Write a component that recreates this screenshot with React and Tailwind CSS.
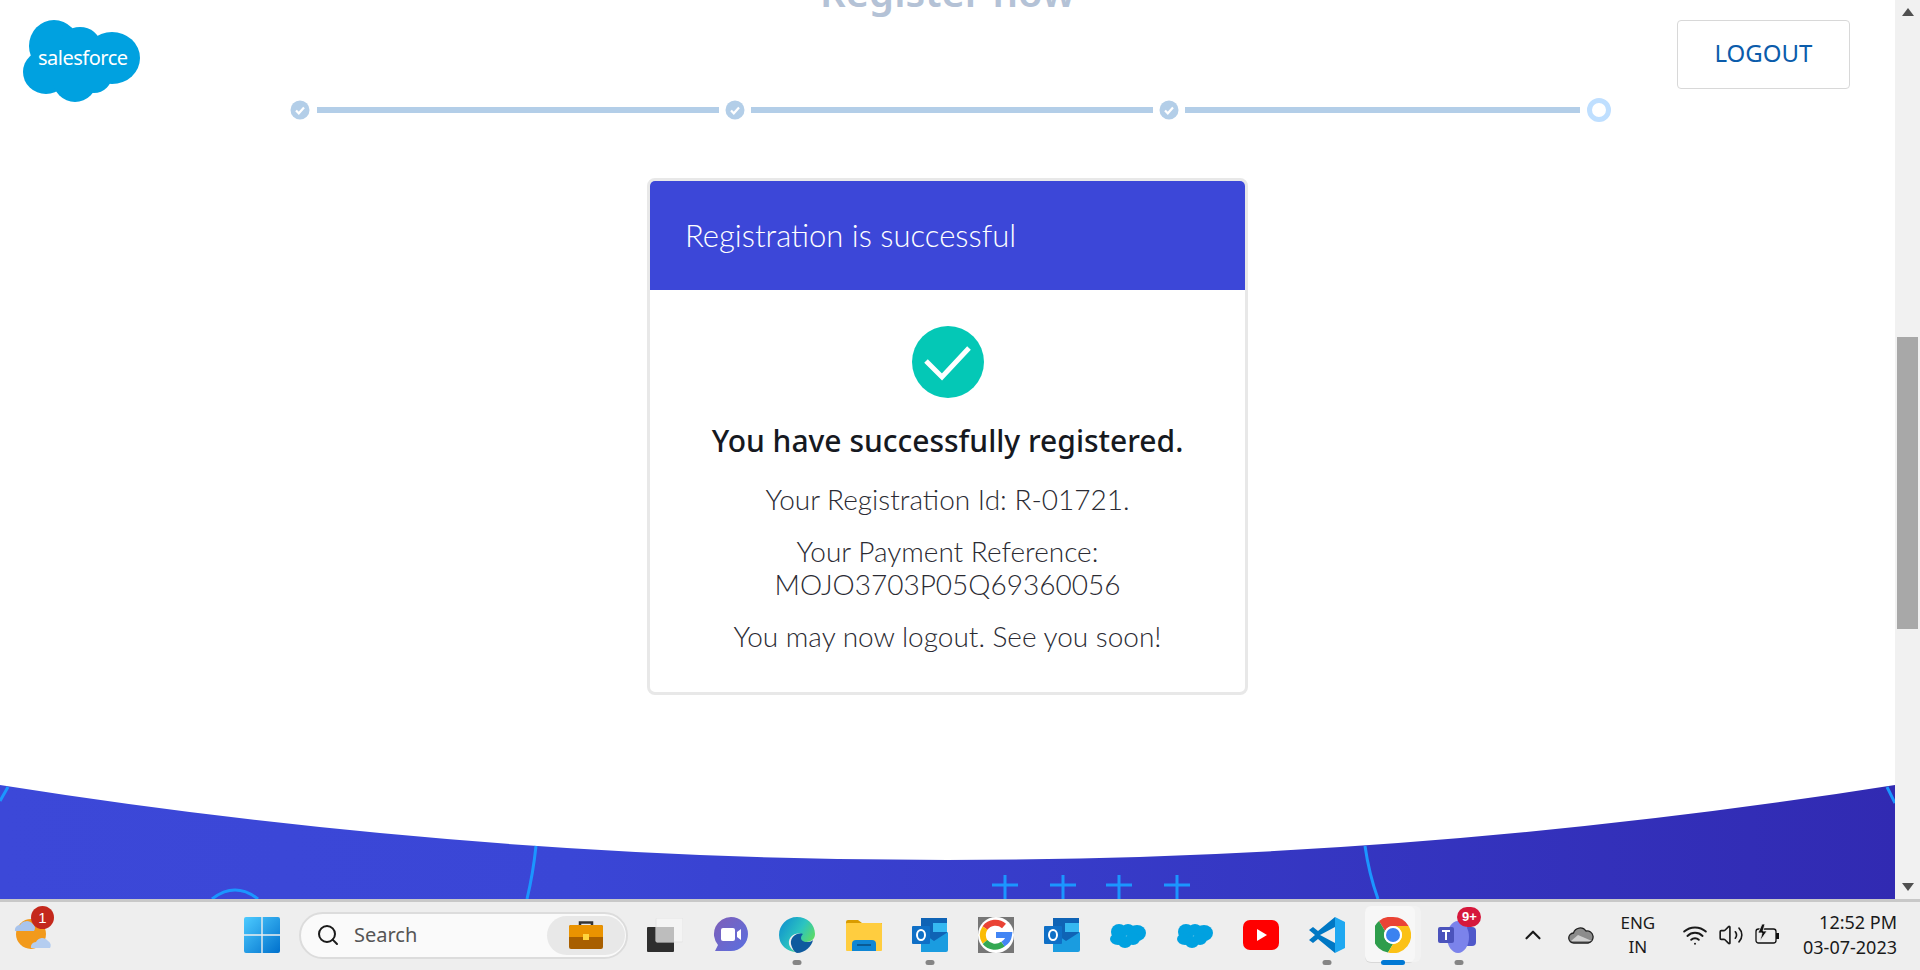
import { ChevronUp, Search, Volume2, Wifi } from 'lucide-react';

const sans = "font-['Noto_Sans','Open_Sans',sans-serif]";
const thin = "font-['Lato','Noto_Sans',sans-serif]";

function StepDone() {
  return (
    <svg width="20" height="20" viewBox="0 0 20 20" className="shrink-0">
      <circle cx="10" cy="10" r="9.5" fill="#b3cee8" />
      <path d="M6 10.5l2.8 2.8L14 7.5" fill="none" stroke="#fff" strokeWidth="2.2" />
    </svg>
  );
}

function Stepper() {
  return (
    <div className="flex items-center w-[1324px] ml-[290px] h-[26px] shrink-0">
      <StepDone />
      <div className="h-[6px] bg-[#b3cee8] w-[402px] ml-[7px]" />
      <div className="ml-[6px]"><StepDone /></div>
      <div className="h-[6px] bg-[#b3cee8] w-[402px] ml-[6px]" />
      <div className="ml-[6px]"><StepDone /></div>
      <div className="h-[6px] bg-[#b3cee8] w-[395px] ml-[6px]" />
      <div className="ml-[7px] w-[24px] h-[24px] rounded-full border-[5px] border-[#bfdfff] bg-white" />
    </div>
  );
}

function SalesforceLogo() {
  return (
    <div className="relative w-[118px] h-[82px] shrink-0">
      <svg width="118" height="82" viewBox="0 0 118 82" className="block">
        <g fill="#00a1e0">
          <ellipse cx="32" cy="26" rx="25" ry="26" />
          <ellipse cx="58" cy="24" rx="20" ry="17" />
          <ellipse cx="90" cy="38" rx="28" ry="26" />
          <ellipse cx="24" cy="52" rx="23" ry="22" />
          <ellipse cx="53" cy="60" rx="22" ry="22" />
          <ellipse cx="72" cy="55" rx="18" ry="18" />
          <rect x="25" y="24" width="70" height="36" />
        </g>
      </svg>
      <span className="absolute left-[16px] top-[26px] text-[20px] leading-[24px] text-white font-['Noto_Sans',sans-serif] tracking-[-0.5px]">salesforce</span>
    </div>
  );
}

function PageFooter() {
  return (
    <svg width="1895" height="130" viewBox="0 0 1895 130" className="block mt-auto shrink-0">
      <defs>
        <linearGradient id="band" x1="0" x2="1" y1="0" y2="0">
          <stop offset="0" stopColor="#3c48d8" />
          <stop offset="0.3" stopColor="#3a46d6" />
          <stop offset="1" stopColor="#312ab2" />
        </linearGradient>
      </defs>
      <path d="M0 16 Q947 166 1895 16 V130 H0Z" fill="url(#band)" />
      <g fill="none" stroke="#1b96ff" strokeWidth="3">
        <path d="M8 18 L0 32" />
        <path d="M1887 18 L1895 34" />
        <path d="M536 77 Q533 105 527 130" />
        <path d="M1365 77 Q1369 105 1378 130" />
        <path d="M212 130 Q235 112 258 130" />
        <path d="M992 116H1018M1005 106V130M1050 116H1076M1063 106V130M1106 116H1132M1119 106V130M1164 116H1190M1177 106V130" />
      </g>
    </svg>
  );
}

function Card() {
  return (
    <div className="w-[601px] h-[517px] mx-auto mt-[55px] border-[3px] border-[#e8e8e8] rounded-[8px] overflow-hidden bg-white shrink-0">
      <div className={`h-[109px] bg-[#3c47d8] flex items-center pl-[35px] text-white text-[31px] font-light ${thin}`}>
        Registration is successful
      </div>
      <div className="flex flex-col items-center text-center">
        <svg width="72" height="72" viewBox="0 0 72 72" className="mt-[36px]">
          <circle cx="36" cy="36" r="36" fill="#04c8b6" />
          <path d="M14 35l16 16 27-29" fill="none" stroke="#fff" strokeWidth="5" />
        </svg>
        <p className={`mt-[23px] text-[30px] leading-[40px] font-medium text-[#16191f] ${sans}`}>You have successfully registered.</p>
        <div className={`mt-[22px] text-[28px] leading-[33px] font-light text-[#2b2b33] ${thin}`}>
          <p>Your Registration Id: R-01721.</p>
          <p className="mt-[19px]">Your Payment Reference:<br />MOJO3703P05Q69360056</p>
          <p className="mt-[19px]">You may now logout. See you soon!</p>
        </div>
      </div>
    </div>
  );
}

function Dot({ blue }) {
  return blue
    ? <span className="absolute bottom-[3px] left-1/2 -translate-x-1/2 w-[24px] h-[5px] rounded-full bg-[#0078d4]" />
    : <span className="absolute bottom-[3px] left-1/2 -translate-x-1/2 w-[9px] h-[5px] rounded-full bg-[#858585]" />;
}

function TaskIcon({ children, dot, blue, active }) {
  return (
    <div className="relative w-[66.2px] h-[66px] flex items-center justify-center shrink-0">
      {active && <div className="absolute left-[5px] top-[4px] w-[50px] h-[56px] rounded-[6px] bg-[#f7f7f7] shadow-[6px_0_0_#f2f2f2,0_1px_0_#d8d8d8]" />}
      <div className="relative">{children}</div>
      {(dot || blue) && <Dot blue={blue} />}
    </div>
  );
}

const WinLogo = () => (
  <svg width="36" height="36" viewBox="0 0 36 36">
    <defs>
      <linearGradient id="win" x1="0" y1="0" x2="1" y2="1">
        <stop offset="0" stopColor="#4dcbff" />
        <stop offset="1" stopColor="#0070cc" />
      </linearGradient>
    </defs>
    <path d="M0 2a2 2 0 012-2h15.300v17.300H0zM18.700 0H34a2 2 0 012 2v15.300H18.700zM0 18.700h17.300V36H2a2 2 0 01-2-2zM18.700 18.700H36V34a2 2 0 01-2 2H18.700z" fill="url(#win)" />
  </svg>
);

const Briefcase = () => (
  <svg width="36" height="30" viewBox="0 0 36 30">
    <path d="M12 6V2.500h12V6" fill="none" stroke="#333" strokeWidth="2.500" />
    <rect x="1" y="5" width="34" height="24" rx="2" fill="#a85f00" />
    <path d="M1 7a2 2 0 012-2h30a2 2 0 012 2v10H1z" fill="#ea9300" />
    <rect x="15" y="14" width="6" height="6" fill="#ffd43d" />
  </svg>
);

const TaskView = () => (
  <svg width="36" height="34" viewBox="0 0 36 34">
    <rect x="0" y="9" width="27" height="25" rx="1" fill="#2e2e2e" />
    <rect x="9" y="0" width="27" height="24" rx="1" fill="#f4f4f4" stroke="#e4e4e4" />
    <rect x="9" y="9" width="18" height="15" fill="#bdbdbd" />
  </svg>
);

const MeetChat = () => (
  <svg width="36" height="36" viewBox="0 0 36 36">
    <defs>
      <linearGradient id="meet" x1="0" y1="0" x2="1" y2="1">
        <stop offset="0" stopColor="#7f5fb8" />
        <stop offset="1" stopColor="#5a6fe0" />
      </linearGradient>
    </defs>
    <path d="M18 0a17 17 0 110 34H2l3-6A17 17 0 0118 0z" fill="url(#meet)" />
    <rect x="8" y="11" width="14" height="13" rx="2" fill="#fff" />
    <path d="M24 15l4-3v11l-4-3z" fill="#fff" />
  </svg>
);

const Edge = () => (
  <svg width="36" height="36" viewBox="0 0 36 36">
    <defs>
      <linearGradient id="edge" x1="0" y1="0" x2="1" y2="0.600">
        <stop offset="0" stopColor="#0c8ad0" />
        <stop offset="0.600" stopColor="#2cc4c0" />
        <stop offset="1" stopColor="#60dc60" />
      </linearGradient>
    </defs>
    <path d="M18 0c10 0 18 7 18 17 0 6-5 8-10 8-4 0-6-2-6-4 0-2 1-3 2-4-6-2-13 3-12 10 1 4 4 7 8 8C8 35 0 28 0 18 0 8 8 0 18 0z" fill="url(#edge)" />
    <path d="M12 27c-1-7 6-12 12-10-1 1-2 2-2 4 0 2 2 4 6 4 3 0 5-1 6-2-1 6-8 13-16 13-3-1-5-5-6-9z" fill="#0f5a9e" />
  </svg>
);

const Folder = () => (
  <svg width="36" height="32" viewBox="0 0 36 32">
    <path d="M0 3a2 2 0 012-2h10l4 3h20v4H0z" fill="#d99c00" />
    <rect x="0" y="4" width="36" height="28" rx="1" fill="#ffcd3f" />
    <path d="M6 32v-7a4 4 0 014-4h16a4 4 0 014 4v7z" fill="#0f86d4" />
    <rect x="11" y="25" width="14" height="2" fill="#0a5a94" />
  </svg>
);

const Outlook = () => (
  <svg width="36" height="34" viewBox="0 0 36 34">
    <rect x="9" y="0" width="26" height="24" fill="#0f63b5" />
    <rect x="21" y="5" width="14" height="9" fill="#35b8f1" />
    <path d="M9 14l13 9 14-9v18a2 2 0 01-2 2H9z" fill="#1a9ce0" />
    <rect x="0" y="8" width="18" height="18" rx="1" fill="#0f6fc6" />
    <ellipse cx="9" cy="17" rx="4" ry="5" fill="none" stroke="#fff" strokeWidth="2" />
  </svg>
);

const GoogleTile = () => (
  <svg width="36" height="36" viewBox="0 0 36 36">
    <rect width="36" height="36" fill="#767676" />
    <circle cx="18" cy="18" r="18" fill="#fff" />
    <g fill="none" strokeWidth="6">
      <path d="M26 9a13 13 0 00-19 2" stroke="#ea4335" />
      <path d="M7 11a13 13 0 000 14" stroke="#fbbc05" />
      <path d="M7 25a13 13 0 0018 2" stroke="#34a853" />
      <path d="M25 27a12 12 0 006-9H18" stroke="#4285f4" />
    </g>
  </svg>
);

const Cloud = () => (
  <svg width="36" height="26" viewBox="0 0 36 26">
    <g fill="#00a1e0">
      <ellipse cx="9" cy="10" rx="8" ry="8" />
      <ellipse cx="18" cy="8" rx="7" ry="6" />
      <ellipse cx="27" cy="11" rx="9" ry="8" />
      <ellipse cx="8" cy="17" rx="8" ry="6" />
      <ellipse cx="15" cy="20" rx="7" ry="6" />
      <ellipse cx="23" cy="17" rx="7" ry="6" />
    </g>
  </svg>
);

const YouTube = () => (
  <svg width="36" height="30" viewBox="0 0 36 30">
    <rect width="36" height="30" rx="7" fill="#ff0000" />
    <path d="M14 9l10 6-10 6z" fill="#fff" />
  </svg>
);

const VsCode = () => (
  <svg width="36" height="36" viewBox="0 0 36 36">
    <path d="M26 0l10 5v26l-10 5z" fill="#1fa8f1" />
    <path d="M26 0v10L11 18l15 8v10L9 22l-5 4-4-3 6-5-6-5 4-3 5 4z" fill="#0078c4" />
  </svg>
);

const Chrome = () => (
  <svg width="36" height="36" viewBox="0 0 36 36">
    <path d="M18 0a18 18 0 0115.600 9H18a9 9 0 00-8 5L4 4a18 18 0 0114-4z" fill="#ea4335" />
    <path d="M4 4l6 10a9 9 0 008 13l-5 8.500A18 18 0 014 4z" fill="#2e9d4c" />
    <path d="M33.600 9A18 18 0 0113 35.500l5-8.500a9 9 0 008-13 9 9 0 00-8-5z" fill="#fbc116" />
    <circle cx="18" cy="18" r="9" fill="#fff" />
    <circle cx="18" cy="18" r="7" fill="#3b82f0" />
  </svg>
);

const Teams = () => (
  <div className="relative w-[42px] h-[36px]">
    <svg width="42" height="36" viewBox="0 0 42 36">
      <rect x="26" y="10" width="12" height="19" rx="4" fill="#4f58ca" />
      <ellipse cx="20" cy="20" rx="11" ry="16" fill="#7b83eb" />
      <rect x="0" y="10" width="16" height="16" rx="2" fill="#4b53bc" />
      <path d="M4 14h8M8 14v9" stroke="#fff" strokeWidth="2" />
    </svg>
    <span className="absolute left-[19px] top-[-10px] w-[24px] h-[20px] rounded-full bg-[#d6183c] text-white text-[13px] leading-[20px] font-bold text-center font-['Liberation_Sans',sans-serif]">9+</span>
  </div>
);

const Weather = () => (
  <div className="relative w-[38px] h-[40px]">
    <svg width="38" height="40" viewBox="0 0 38 40" className="block">
      <circle cx="17" cy="22" r="15" fill="#f29a1c" />
      <path d="M1 19a5 5 0 015-6 8 8 0 0113-1 5 5 0 011 7z" fill="#a9c4ec" />
      <path d="M17 36a5 5 0 015-6 7 7 0 0112-1 5 5 0 012 7z" fill="#b4cdf0" />
    </svg>
    <span className="absolute left-[17px] top-[-6px] w-[23px] h-[23px] rounded-full bg-[#c4281c] text-white text-[15px] leading-[23px] text-center font-['Liberation_Sans',sans-serif]">1</span>
  </div>
);

const OneDrive = () => (
  <svg width="26" height="18" viewBox="0 0 26 18">
    <path d="M6 17a5 5 0 01-.5-10A7 7 0 0118 5a6 6 0 012 12z" fill="#8c8c8c" stroke="#222" strokeWidth="1.300" />
    <path d="M3 15l7-6 14 6z" fill="#cfcfcf" />
  </svg>
);

const Battery = () => (
  <svg width="25" height="22" viewBox="0 0 25 22">
    <rect x="1" y="5" width="20" height="14" rx="2.500" fill="none" stroke="#111" strokeWidth="1.300" />
    <rect x="21" y="9" width="3" height="6" fill="#111" />
    <path d="M7 0L3 9h4l-2 8 7-10H8l2-7z" fill="#111" stroke="#eeeeee" strokeWidth="0.800" />
  </svg>
);

function Taskbar() {
  return (
    <div className="h-[71px] shrink-0 flex items-center pb-[2px] bg-[#eeeeee] border-t-[3px] border-[#c8c8c8] font-['Noto_Sans',sans-serif] text-[#1a1a1a] overflow-hidden">
      <div className="ml-[14px] w-[38px] shrink-0 mb-[6px]"><Weather /></div>
      <div className="ml-[192px] shrink-0"><WinLogo /></div>
      <div className="ml-[19px] w-[329px] h-[47px] rounded-full bg-[#fafafa] border-2 border-[#dcdcdc] flex items-center shrink-0">
        <Search size={24} strokeWidth={2} className="ml-[15px] text-[#1a1a1a]" />
        <span className="ml-[14px] text-[20px] text-[#555]">Search</span>
        <div className="ml-auto mr-[1px] w-[78px] h-[39px] rounded-full bg-[#e8e8e8] flex items-center justify-center"><Briefcase /></div>
      </div>
      <div className="ml-[4px] flex items-center">
        <TaskIcon><TaskView /></TaskIcon>
        <TaskIcon><MeetChat /></TaskIcon>
        <TaskIcon dot><Edge /></TaskIcon>
        <TaskIcon><Folder /></TaskIcon>
        <TaskIcon dot><Outlook /></TaskIcon>
        <TaskIcon><GoogleTile /></TaskIcon>
        <TaskIcon><Outlook /></TaskIcon>
        <TaskIcon><Cloud /></TaskIcon>
        <TaskIcon><Cloud /></TaskIcon>
        <TaskIcon><YouTube /></TaskIcon>
        <TaskIcon dot><VsCode /></TaskIcon>
        <TaskIcon blue active><Chrome /></TaskIcon>
        <TaskIcon dot><Teams /></TaskIcon>
      </div>
      <div className="ml-[28px] flex items-center shrink-0">
        <ChevronUp size={26} strokeWidth={2} />
        <div className="ml-[22px]"><OneDrive /></div>
        <div className="ml-[26px] text-center text-[17px] leading-[24px]">ENG<br />IN</div>
        <Wifi size={26} strokeWidth={1.800} className="ml-[27px]" />
        <Volume2 size={26} strokeWidth={1.500} className="ml-[10px]" />
        <div className="ml-[11px]"><Battery /></div>
      </div>
      <div className="ml-auto mr-[23px] text-right text-[18px] leading-[25px] shrink-0">12:52 PM<br />03-07-2023</div>
    </div>
  );
}

function Scrollbar() {
  return (
    <div className="w-[25px] shrink-0 bg-[#f1f1f1] flex flex-col items-center">
      <svg width="12" height="8" viewBox="0 0 12 8" className="mt-[8px] shrink-0"><path d="M6 0l6 8H0z" fill="#505050" /></svg>
      <div className="w-[21px] h-[292px] bg-[#a8a8a8] mt-[321px] shrink-0" />
      <svg width="12" height="8" viewBox="0 0 12 8" className="mt-auto mb-[8px] shrink-0"><path d="M6 8L0 0h12z" fill="#505050" /></svg>
    </div>
  );
}

export default function App() {
  return (
    <div className="w-[1920px] h-[970px] flex flex-col overflow-hidden bg-white">
      <div className="flex h-[899px] overflow-hidden">
        <div className="flex-1 flex flex-col overflow-hidden">
          <div className="flex items-start pt-[20px] pl-[22px] pr-[45px] h-[97px] shrink-0">
            <SalesforceLogo />
            <h1 className={`ml-[680px] mt-[-52px] text-[40px] leading-[48px] font-semibold text-[#b4c2d6] whitespace-nowrap ${sans}`}>Register now</h1>
            <button className={`ml-auto w-[173px] h-[69px] pb-[4px] border border-[#d8d8d8] rounded-[4px] bg-white text-[24px] text-[#0b5cab] ${sans}`}>LOGOUT</button>
          </div>
          <Stepper />
          <Card />
          <PageFooter />
        </div>
        <Scrollbar />
      </div>
      <Taskbar />
    </div>
  );
}
